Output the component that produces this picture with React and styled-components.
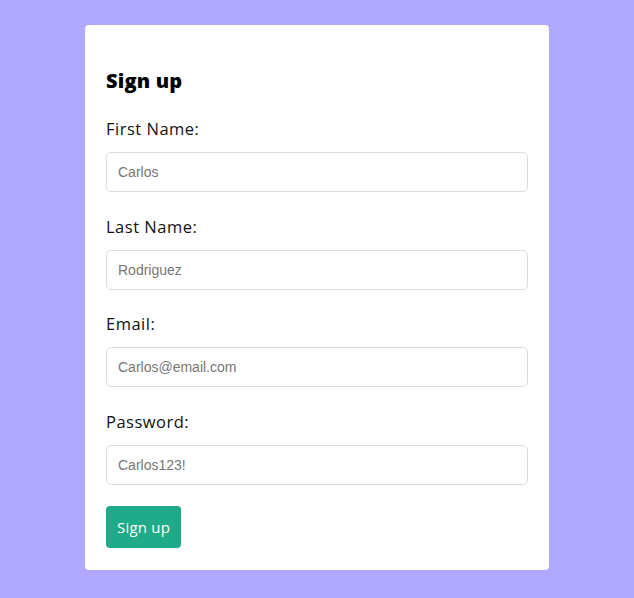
import React from 'react';
import styled, { createGlobalStyle } from 'styled-components';

const GlobalStyle = createGlobalStyle`
  html, body {
    margin: 0;
    padding: 0;
    background: #b0a8fe;
    font-family: "Open Sans", "Noto Sans", sans-serif;
  }
  * { box-sizing: border-box; }
`;

const Page = styled.div`
  min-height: 598px;
  display: flex;
  justify-content: center;
  padding-top: 25px;
`;

const Card = styled.form`
  width: 464px;
  height: 545px;
  background: #fff;
  border-radius: 4px;
  padding: 44px 21px 22px;
  display: flex;
  flex-direction: column;
`;

const Title = styled.h2`
  margin: 0 0 24px;
  font-size: 20px;
  line-height: 24px;
  font-weight: 800;
  color: #000;
  letter-spacing: 0.2px;
`;

const Field = styled.div`
  display: flex;
  flex-direction: column;
  gap: 11px;
  margin-bottom: ${(p) => (p.last ? '21px' : '22.7px')};
`;

const Label = styled.label`
  font-size: 16.5px;
  line-height: 24px;
  letter-spacing: 0.5px;
  color: #111;
`;

const Input = styled.input`
  height: 40px;
  width: 100%;
  border: 1px solid #dcdcdc;
  border-radius: 5px;
  padding: 0 11px;
  font-family: "Liberation Sans", Arial, sans-serif;
  font-size: 14px;
  color: #333;
  outline: none;
  &::placeholder { color: #777; }
`;

const Button = styled.button`
  align-self: flex-start;
  height: 42px;
  padding: 0 11px;
  border: none;
  border-radius: 4px;
  background: #1fab89;
  color: #fff;
  font-family: "Open Sans", "Noto Sans", sans-serif;
  font-size: 15px;
  letter-spacing: 0.2px;
  cursor: pointer;
`;

const fields = [
  { label: 'First Name:', placeholder: 'Carlos', type: 'text' },
  { label: 'Last Name:', placeholder: 'Rodriguez', type: 'text' },
  { label: 'Email:', placeholder: 'Carlos@email.com', type: 'email' },
  { label: 'Password:', placeholder: 'Carlos123!', type: 'text' },
];

export default function App() {
  return (
    <Page>
      <GlobalStyle />
      <Card onSubmit={(e) => e.preventDefault()}>
        <Title>Sign up</Title>
        {fields.map((f, i) => (
          <Field key={f.label} last={i === fields.length - 1}>
            <Label>{f.label}</Label>
            <Input type={f.type} placeholder={f.placeholder} />
          </Field>
        ))}
        <Button type="submit">Sign up</Button>
      </Card>
    </Page>
  );
}
